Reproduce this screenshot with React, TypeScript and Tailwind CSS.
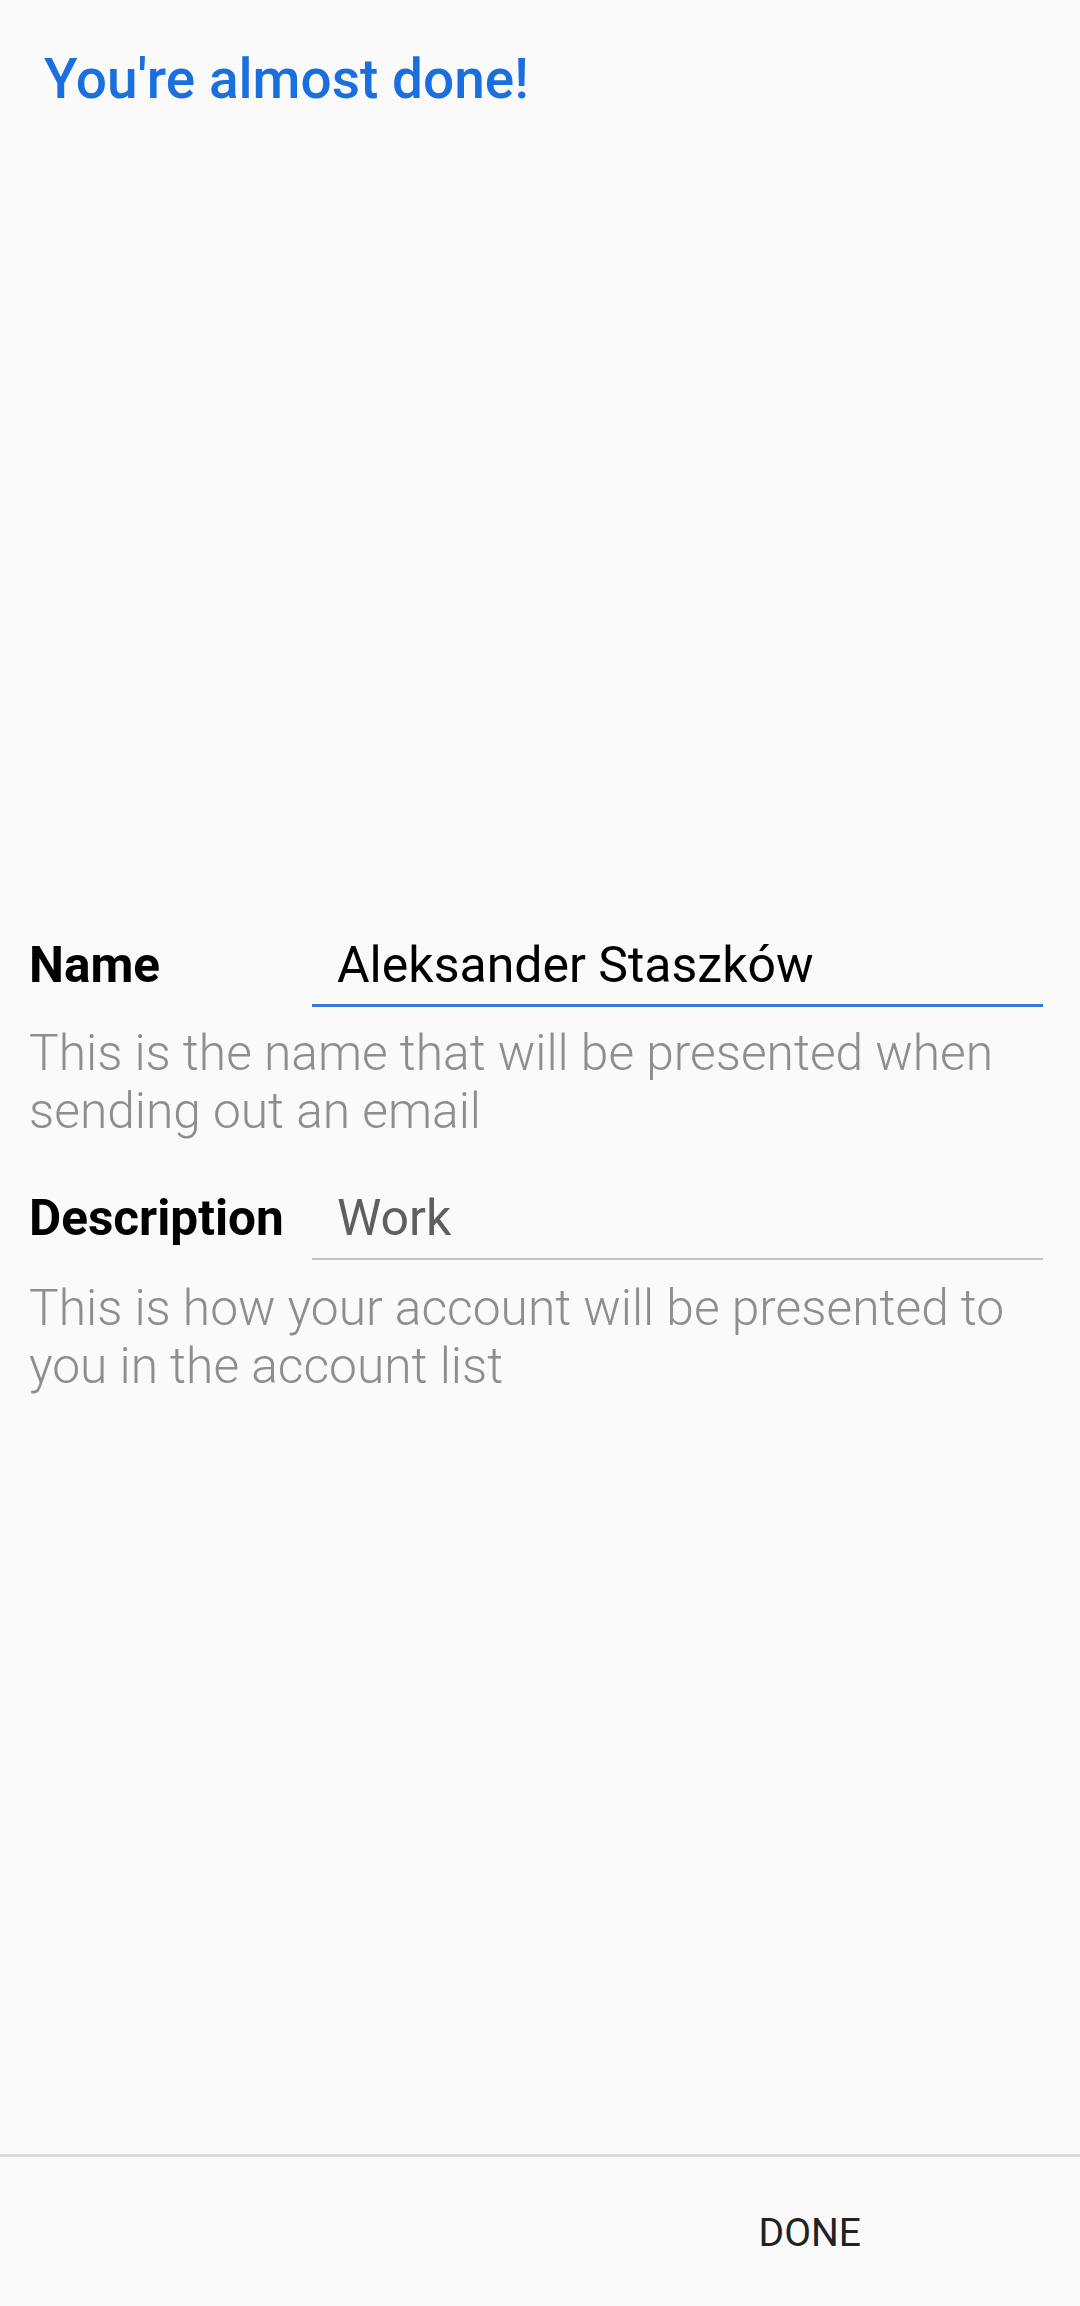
import { useState } from "react";

function Field({ label, value, placeholder, helper, focused, onChange }: {
  label: string;
  value: string;
  placeholder?: string;
  helper: string;
  focused?: boolean;
  onChange: (v: string) => void;
}) {
  return (
    <div>
      <div className="flex items-start">
        <label className="w-[283px] shrink-0 text-[49.5px] leading-[56px] font-bold text-black">{label}</label>
        <div className={`flex-1 ${focused ? "border-b-[3px] border-[#3a78e0] pb-[11px]" : "border-b-2 border-[#c4c4c4] pb-[12px]"}`}>
          <input
            value={value}
            placeholder={placeholder}
            onChange={(e) => onChange(e.target.value)}
            className="w-full bg-transparent pl-[25px] text-[50px] leading-[56px] h-[56px] text-black placeholder-[#5f5f5f] focus:outline-none"
          />
        </div>
      </div>
      <p className={`${focused ? "mt-[17px]" : "mt-[19px]"} text-[49.7px] leading-[58px] font-light text-[#8e8e8e]`}>{helper}</p>
    </div>
  );
}

export default function App() {
  const [name, setName] = useState("Aleksander Staszków");
  const [description, setDescription] = useState("");

  return (
    <div className="flex flex-col h-[2306px] bg-[#fafafa]" style={{ fontFamily: "Roboto, 'Noto Sans', sans-serif" }}>
      <div className="pt-[48px] pl-[44px]">
        <h1 className="text-[55px] leading-[63px] font-medium text-[#1a6fdf]">You're almost done!</h1>
      </div>

      <div className="mt-[826px] pl-[29px] pr-[37px] space-y-[50px]">
        <Field
          label="Name"
          value={name}
          onChange={setName}
          focused
          helper="This is the name that will be presented when sending out an email"
        />
        <Field
          label="Description"
          value={description}
          placeholder="Work"
          onChange={setDescription}
          helper="This is how your account will be presented to you in the account list"
        />
      </div>

      <div className="mt-auto h-[152px] border-t-[3px] border-[#dcdcdc] flex justify-end pr-[219px] pt-[53px]">
        <button className="h-[47px] text-[39px] leading-[47px] text-[#222]">DONE</button>
      </div>
    </div>
  );
}
